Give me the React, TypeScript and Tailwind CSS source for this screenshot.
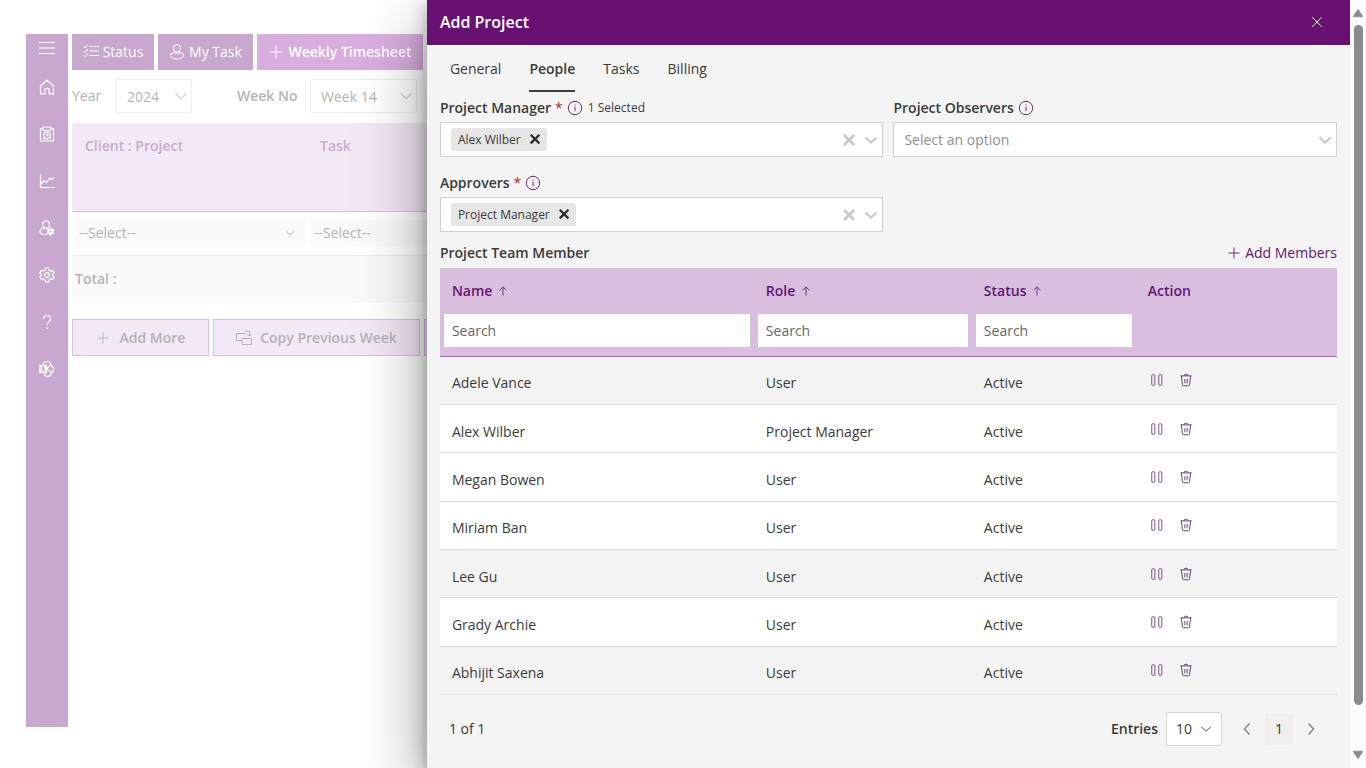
import { useState } from 'react';
import type { ReactNode, SVGProps } from 'react';

interface Member {
    name: string;
    role: string;
    status: string;
    shaded?: boolean;
}

const MEMBERS: Member[] = [
    { name: 'Adele Vance', role: 'User', status: 'Active', shaded: true },
    { name: 'Alex Wilber', role: 'Project Manager', status: 'Active' },
    { name: 'Megan Bowen', role: 'User', status: 'Active' },
    { name: 'Miriam Ban', role: 'User', status: 'Active' },
    { name: 'Lee Gu', role: 'User', status: 'Active', shaded: true },
    { name: 'Grady Archie', role: 'User', status: 'Active' },
    { name: 'Abhijit Saxena', role: 'User', status: 'Active', shaded: true },
];

const TABS = ['General', 'People', 'Tasks', 'Billing'];

const Icon = ({ children, ...props }: SVGProps<SVGSVGElement>) => (
    <svg viewBox="0 0 16 16" width="16" height="16" fill="none" stroke="currentColor" strokeWidth="1" aria-hidden="true" {...props}>
        {children}
    </svg>
);

const PlusIcon = (props: SVGProps<SVGSVGElement>) => (
    <Icon {...props}><path d="M8 1.5v13M1.5 8h13" /></Icon>
);

const ChevronIcon = (props: SVGProps<SVGSVGElement>) => (
    <Icon {...props}><path d="M2.500 5.500 8 10.500 13.500 5.500" /></Icon>
);

const CrossIcon = (props: SVGProps<SVGSVGElement>) => (
    <Icon {...props}><path d="m3 3 10 10M13 3 3 13" /></Icon>
);

const InfoIcon = () => (
    <Icon className="text-[#6b2a78]">
        <circle cx="8" cy="8" r="6.700" />
        <path d="M8 6.800v4.400M8 4.500v1.200" />
    </Icon>
);

const SortIcon = () => (
    <Icon width="12" height="12" className="text-[#6a3a78]" strokeWidth="1.300">
        <path d="M8 14V2.500M3.500 7 8 2.500 12.500 7" />
    </Icon>
);

const PauseIcon = () => (
    <Icon width="14" height="14">
        <rect x="2" y="2" width="3.500" height="12" rx="1" />
        <rect x="10" y="2" width="3.500" height="12" rx="1" />
    </Icon>
);

const TrashIcon = () => (
    <Icon width="14" height="14" strokeWidth="1.100">
        <path d="M1.500 3.300h13M6 3.300V2.600c0-.7.4-1.100 1-1.100h2c.6 0 1 .4 1 1.100v.7M2.800 3.300l1.100 10.200c.1.700.5 1.100 1.200 1.100h5.800c.7 0 1.100-.4 1.200-1.100l1.100-10.200M6.700 6.800v5M9.300 6.800v5" />
    </Icon>
);

const NAV_ITEMS: { label: string; icon: ReactNode }[] = [
    {
        label: 'Home',
        icon: <path d="M1.500 7 8 1.200 14.500 7v7.800H10V9.500H6v5.300H1.500z" strokeLinejoin="round" />,
    },
    {
        label: 'Timesheet',
        icon: (
            <>
                <path d="M4 2.500H1.500v12.500h13V2.500H12" />
                <path d="M4 1h8v3.500H4z" />
                <circle cx="8" cy="9.500" r="3.300" />
                <path d="M8 7.500v2.200h1.500M4 12.500h8" />
            </>
        ),
    },
    {
        label: 'Reports',
        icon: <path d="M1.500 1.500v13H15M2 11l3-3.500 2.500 2L11 5l2 1.500L15 4.500" />,
    },
    {
        label: 'People settings',
        icon: (
            <>
                <circle cx="7" cy="4.500" r="3.500" />
                <path d="M7.500 14.500H5c-2.300 0-4-1-4-3s1.200-3 3-3h4" />
                <circle cx="11.500" cy="11.500" r="2.100" strokeWidth="2" />
                <path d="M11.500 7.200v2M11.500 13.800v2M7.800 9.400l1.800 1M13.400 12.600l1.800 1M7.800 13.600l1.800-1M13.400 10.400l1.800-1" strokeWidth="1.600" />
            </>
        ),
    },
    {
        label: 'Settings',
        icon: (
            <>
                <path
                    d="M6.500 1h3l.5 2.200 1.500.9 2.200-.7 1.500 2.600L13.500 7.500v1l1.700 1.500-1.500 2.600-2.200-.7-1.500.9L9.500 15h-3L6 12.800l-1.500-.9-2.200.7L.8 10l1.700-1.500v-1L.8 6l1.500-2.600 2.200.7L6 3.200z"
                    strokeLinejoin="round"
                />
                <circle cx="8" cy="8" r="2.300" />
            </>
        ),
    },
    {
        label: 'Help',
        icon: <path d="M4.500 4.800C4.500 2.700 6 1.500 8 1.500s3.600 1.300 3.600 3.200C11.600 7.500 8 7.800 8 11.300M8 13.300V15" />,
    },
    {
        label: 'SharePoint',
        icon: (
            <>
                <path d="M4 4.500a4 4 0 0 1 8 0 4 4 0 0 1 0 7.500 3.300 3.300 0 0 1-6.600 0" />
                <path d="M12 4.700a3.700 3.700 0 0 0-3.600 4M12 12a3.300 3.300 0 0 0-3.500-3" />
                <rect x="0.500" y="4.500" width="7" height="7" fill="currentColor" />
                <path d="M5.500 6.200H3.200v1.700h2v1.800H2.800" stroke="#c8a8ce" />
            </>
        ),
    },
];

interface PickerProps {
    id: string;
    label: string;
    required?: boolean;
    note?: string;
    value?: string;
}

const PeoplePicker = ({ id, label, required, note, value }: PickerProps) => (
    <div>
        <div className="flex h-7 items-center gap-1">
            <label htmlFor={id} className="text-sm font-semibold">
                {label}
                {required && <span className="ml-1 font-normal text-[#b3261e]">*</span>}
            </label>
            <InfoIcon />
            {note && <span className="ml-px text-xs">{note}</span>}
        </div>
        <div className="flex h-[35px] items-center border border-[#d0d0d0] bg-white pr-[3px] pl-[10px]">
            {value && (
                <span className="flex h-[23px] items-center gap-2 rounded-xs bg-[#e6e6e6] pr-[5px] pl-[7px] text-xs">
                    {value}
                    <button type="button" aria-label={`Remove ${value}`}>
                        <CrossIcon width="13" height="13" viewBox="1 1 15 15" strokeWidth="2.600" className="text-[#2b2b2b]" />
                    </button>
                </span>
            )}
            <input
                id={id}
                placeholder={value ? undefined : 'Select an option'}
                className="h-full min-w-0 flex-1 bg-transparent text-sm outline-none placeholder:text-[#8f8f8f]"
            />
            <div className="flex items-center gap-[6px] text-[#c8c8c8]">
                {value && (
                    <button type="button" aria-label={`Clear ${label}`}>
                        <CrossIcon strokeWidth="2.600" />
                    </button>
                )}
                <button type="button" aria-label={`Open ${label}`}>
                    <ChevronIcon strokeWidth="2.200" />
                </button>
            </div>
        </div>
    </div>
);

const FadedSelect = ({ id, value, className }: { id: string; value: string; className: string }) => (
    <div className={`relative rounded-xs border border-[#efefef] ${className}`}>
        <select id={id} className="h-full w-full appearance-none bg-transparent px-[10px] pt-px text-sm outline-none">
            <option>{value}</option>
        </select>
        <ChevronIcon strokeWidth="1.700" className="pointer-events-none absolute top-1/2 right-[2px] -translate-y-1/2 text-[#dedede]" />
    </div>
);

const RowSelect = ({ label }: { label: string }) => (
    <div className="relative h-[26px] bg-[#fafafa]">
        <select aria-label={label} className="h-full w-full appearance-none bg-transparent px-1 text-sm outline-none">
            <option>--Select--</option>
        </select>
        <ChevronIcon width="12" height="12" strokeWidth="1.300" className="pointer-events-none absolute top-1/2 right-[9px] -translate-y-1/2" />
    </div>
);

const TimesheetPage = () => (
    <div className="flex h-full pt-[34px] pb-[41px] pl-[26px] text-[#b4b4b4]">
        <nav className="flex w-[42px] shrink-0 flex-col items-center bg-[#c8a8ce] text-white">
            <button type="button" aria-label="Menu" className="h-7">
                <Icon><path d="M0 2.500h16M0 8h16M0 13.500h16" /></Icon>
            </button>
            <div className="flex flex-col gap-[31px] pt-[17px]">
                {NAV_ITEMS.map((item) => (
                    <a key={item.label} href="#" aria-label={item.label}>
                        <Icon className="block" strokeWidth="1.200">{item.icon}</Icon>
                    </a>
                ))}
            </div>
        </nav>

        <main className="min-w-0 flex-1 pl-1">
            <div className="flex h-9 gap-1 text-sm font-medium text-white">
                <button type="button" className="flex w-[82px] items-center justify-center gap-1 bg-[#c8a8ce]">
                    <Icon>
                        <path d="M6.500 2.500H16M6.500 7h9.500M6.500 11.500H16M.5 2.500 2 4l3-3.500M.5 7 2 8.500 5 5M.5 11.500 2 13l3-3.500" />
                    </Icon>
                    Status
                </button>
                <button type="button" className="flex w-[95px] items-center justify-center gap-1 bg-[#c8a8ce]">
                    <Icon>
                        <circle cx="8" cy="4.300" r="3.700" />
                        <path d="M4 9h8c1.500 0 2.500.8 2.500 2 0 2.500-2.500 4-6.500 4s-6.500-1.500-6.500-4c0-1.200 1-2 2.500-2z" />
                    </Icon>
                    My Task
                </button>
                <button type="button" className="flex w-[166px] items-center justify-center gap-1 bg-[#d8aede] font-semibold">
                    <PlusIcon />
                    Weekly Timesheet
                </button>
            </div>

            <div className="flex items-center pt-[9px] pb-[10px]">
                <label htmlFor="year" className="w-11 text-sm font-medium">Year</label>
                <FadedSelect id="year" value="2024" className="h-[34px] w-[76px]" />
                <label htmlFor="week" className="ml-[45px] w-[73px] text-sm font-semibold">Week No</label>
                <FadedSelect id="week" value="Week 14" className="h-[34px] w-[107px]" />
            </div>

            <table className="w-full table-fixed border-collapse text-left text-sm">
                <thead>
                    <tr className="h-[88px] border-b border-[#d9bde0] bg-[#f3e8f5] align-top text-[#c9abcd]">
                        <th className="w-[235px] pt-[13px] pl-[13px] font-semibold">Client : Project</th>
                        <th className="pt-[13px] pl-[13px] font-semibold">Task</th>
                    </tr>
                </thead>
                <tbody>
                    <tr className="h-11 border-b border-[#ededed]">
                        <td className="pr-[2px] pl-[3px]"><RowSelect label="Client : Project" /></td>
                        <td className="pl-[3px]"><RowSelect label="Task" /></td>
                    </tr>
                    <tr className="h-12 bg-[#fafafa]">
                        <td colSpan={2} className="pl-[3px] font-semibold">Total :</td>
                    </tr>
                </tbody>
            </table>

            <div className="mt-4 flex h-[37px] gap-1 text-sm font-semibold">
                <button type="button" className="flex w-[137px] items-center justify-center gap-[10px] border border-[#d9bfdf] bg-[#f3e8f5]">
                    <PlusIcon width="14" height="14" />
                    Add More
                </button>
                <button type="button" className="flex w-[207px] items-center justify-center gap-2 border border-[#d9bfdf] bg-[#f3e8f5]">
                    <Icon>
                        <path d="M6 10.500H.5v-7H10M6 8.500h9.500v6H6zM9 1h4.500v5M11.500 4.200l2 2 2-2" />
                    </Icon>
                    Copy Previous Week
                </button>
                <button type="button" className="w-[137px] border border-[#d9bfdf] bg-[#f3e8f5]">Save</button>
            </div>
        </main>
    </div>
);

const MemberTable = () => (
    <table className="h-[427px] w-full table-fixed border-collapse text-left text-sm">
        <thead className="bg-[#d9bedf] text-[#641573]">
            <tr className="h-[46px]">
                {['Name', 'Role', 'Status'].map((column, i) => (
                    <th
                        key={column}
                        className={`pl-3 font-semibold ${i === 0 ? 'w-[35%]' : ''} ${i === 1 ? 'w-[218px]' : ''} ${i === 2 ? 'w-[164px]' : ''}`}
                    >
                        <button type="button" className="flex items-center gap-[5px]">
                            {column}
                            <SortIcon />
                        </button>
                    </th>
                ))}
                <th className="pl-3 font-semibold">Action</th>
            </tr>
            <tr className="h-[42px] border-b border-[#a95fb5] align-top">
                {['name', 'role', 'status'].map((field) => (
                    <td key={field} className="px-1">
                        <input
                            aria-label={`Search ${field}`}
                            placeholder="Search"
                            className="block h-[33px] w-full bg-white px-2 text-[#3b3b3b] outline-none placeholder:text-[#666]"
                        />
                    </td>
                ))}
                <td />
            </tr>
        </thead>
        <tbody>
            {MEMBERS.map((member) => (
                <tr key={member.name} className={`h-12 border-b border-[#dcdcdc] ${member.shaded ? 'bg-[#f3f3f3]' : 'bg-white'}`}>
                    <td className="pt-[6px] pl-3">{member.name}</td>
                    <td className="pt-[6px] pl-3">{member.role}</td>
                    <td className="pt-[6px] pl-3">{member.status}</td>
                    <td className="pl-[14px]">
                        <div className="flex gap-[15px] text-[#6b3a78]">
                            <button type="button" aria-label={`Pause ${member.name}`}><PauseIcon /></button>
                            <button type="button" aria-label={`Delete ${member.name}`}><TrashIcon /></button>
                        </div>
                    </td>
                </tr>
            ))}
        </tbody>
    </table>
);

const Pagination = () => (
    <div className="flex items-center pt-[17px] pl-[9px] text-sm">
        <span className="flex-1">1 of 1</span>
        <label htmlFor="entries" className="font-semibold">Entries</label>
        <div className="relative ml-2 h-[34px] w-14 rounded-xs border border-[#d6d6d6] bg-white">
            <select id="entries" className="h-full w-full appearance-none bg-transparent pl-[9px] outline-none">
                <option>10</option>
            </select>
            <ChevronIcon width="14" height="14" className="pointer-events-none absolute top-1/2 right-2 -translate-y-1/2" />
        </div>
        <div className="ml-[17px] flex items-center gap-[10px] pr-[18px] text-[#8a8a8a]">
            <button type="button" aria-label="Previous page">
                <ChevronIcon strokeWidth="1.600" className="rotate-90" />
            </button>
            <button type="button" className="h-[31px] w-7 bg-[#f1efee] text-[#333]">1</button>
            <button type="button" aria-label="Next page">
                <ChevronIcon strokeWidth="1.600" className="-rotate-90" />
            </button>
        </div>
    </div>
);

const ScrollRail = () => (
    <div className="flex w-4 shrink-0 flex-col items-center bg-[#fcfcfc] py-[7px] text-[#8b8b8b]">
        <Icon width="12" height="12" fill="currentColor" strokeLinejoin="round"><path d="M8 3 14.500 13h-13z" /></Icon>
        <div className="mt-[6px] mb-[44px] w-[9px] flex-1 rounded-full bg-[#8b8b8b]" />
        <Icon width="12" height="12" fill="currentColor" strokeLinejoin="round"><path d="M8 13 14.500 3h-13z" /></Icon>
    </div>
);

export default function App() {
    const [activeTab, setActiveTab] = useState('People');

    return (
        <div className="relative h-screen overflow-hidden bg-white font-['Open_Sans','Noto_Sans',sans-serif]">
            <TimesheetPage />

            <div role="dialog" aria-label="Add Project" className="absolute inset-y-0 right-0 flex w-11/16 text-[#3b3b3b] shadow-[0_26px_64px_rgba(0,0,0,0.4),0_5px_16px_rgba(0,0,0,0.3)]">
                <section className="min-w-0 flex-1 bg-[#f4f4f4]">
                    <header className="flex h-[45px] items-center justify-between bg-[#681173] pr-[25px] pb-px pl-[13px] text-white">
                        <h1 className="text-base font-semibold">Add Project</h1>
                        <button type="button" aria-label="Close"><CrossIcon /></button>
                    </header>

                    <div className="px-[13px]">
                        <div role="tablist" className="flex gap-7 pl-[10px] text-sm">
                            {TABS.map((tab) => (
                                <button
                                    key={tab}
                                    type="button"
                                    role="tab"
                                    aria-selected={tab === activeTab}
                                    onClick={() => setActiveTab(tab)}
                                    className={`h-[47px] border-b-2 pt-[3px] ${tab === activeTab ? 'border-[#3b3b3b] font-semibold' : 'border-transparent'}`}
                                >
                                    {tab}
                                </button>
                            ))}
                        </div>

                        <div className="grid grid-cols-2 gap-x-[10px] gap-y-3 pt-[2px]">
                            <PeoplePicker id="manager" label="Project Manager" required note="1 Selected" value="Alex Wilber" />
                            <PeoplePicker id="observers" label="Project Observers" />
                            <PeoplePicker id="approvers" label="Approvers" required value="Project Manager" />
                        </div>

                        <div className="flex h-9 items-center justify-between pt-[6px] text-sm">
                            <h2 className="font-semibold">Project Team Member</h2>
                            <button type="button" className="flex items-center gap-1 text-[#641573]">
                                <PlusIcon width="14" height="14" />
                                Add Members
                            </button>
                        </div>

                        <MemberTable />
                        <Pagination />
                    </div>
                </section>
                <ScrollRail />
            </div>
        </div>
    );
}
